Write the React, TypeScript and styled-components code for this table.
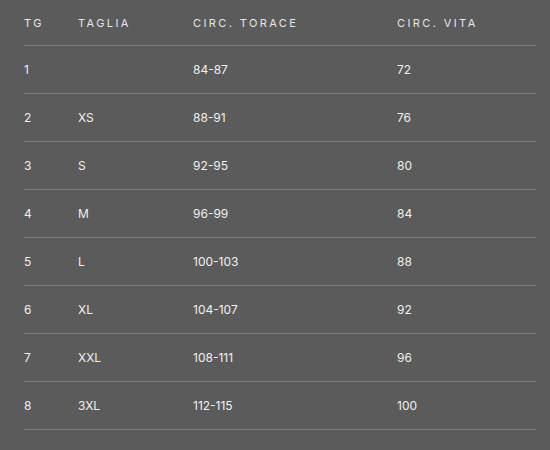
import React from "react";
import styled, { createGlobalStyle } from "styled-components";

const GlobalStyle = createGlobalStyle`
  html, body {
    margin: 0;
    padding: 0;
    background: #5b5b5b;
  }
  body {
    font-family: Inter, "Noto Sans", sans-serif;
  }
`;

interface SizeRow {
  tg: string;
  taglia: string;
  torace: string;
  vita: string;
}

const rows: SizeRow[] = [
  { tg: "1", taglia: "", torace: "84-87", vita: "72" },
  { tg: "2", taglia: "XS", torace: "88-91", vita: "76" },
  { tg: "3", taglia: "S", torace: "92-95", vita: "80" },
  { tg: "4", taglia: "M", torace: "96-99", vita: "84" },
  { tg: "5", taglia: "L", torace: "100-103", vita: "88" },
  { tg: "6", taglia: "XL", torace: "104-107", vita: "92" },
  { tg: "7", taglia: "XXL", torace: "108-111", vita: "96" },
  { tg: "8", taglia: "3XL", torace: "112-115", vita: "100" },
];

const App: React.FC = () => {
  return (
    <>
      <GlobalStyle />
      <Page>
        <SizeTable>
          <colgroup>
            <col style={{ width: 54 }} />
            <col style={{ width: 115 }} />
            <col style={{ width: 204 }} />
            <col />
          </colgroup>
          <thead>
            <tr>
              <HeadCell>TG</HeadCell>
              <HeadCell>TAGLIA</HeadCell>
              <HeadCell>CIRC. TORACE</HeadCell>
              <HeadCell>CIRC. VITA</HeadCell>
            </tr>
          </thead>
          <tbody>
            {rows.map((r) => (
              <tr key={r.tg}>
                <BodyCell>{r.tg}</BodyCell>
                <BodyCell>{r.taglia}</BodyCell>
                <BodyCell>{r.torace}</BodyCell>
                <BodyCell>{r.vita}</BodyCell>
              </tr>
            ))}
          </tbody>
        </SizeTable>
      </Page>
    </>
  );
};

export default App;

const Page = styled.div`
  width: 550px;
  height: 450px;
  padding: 0 14px 0 24px;
  box-sizing: border-box;
  background: #5b5b5b;
`;

const SizeTable = styled.table`
  width: 100%;
  border-collapse: collapse;
  table-layout: fixed;
`;

const HeadCell = styled.th`
  height: 45px;
  padding: 0;
  text-align: left;
  vertical-align: middle;
  font-size: 11px;
  font-weight: 400;
  letter-spacing: 2.4px;
  color: #e6e6e6;
  border-bottom: 1px solid #7a7a7a;
`;

const BodyCell = styled.td`
  height: 47px;
  padding: 0;
  text-align: left;
  vertical-align: middle;
  font-size: 12px;
  font-weight: 400;
  color: #f0f0f0;
  border-bottom: 1px solid #7a7a7a;
`;
